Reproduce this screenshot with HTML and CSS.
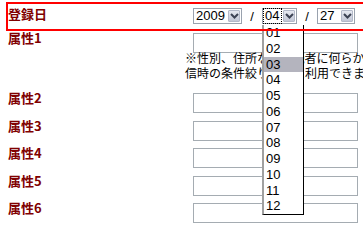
FILE: index.html
```html
<!DOCTYPE html>
<html lang="ja">
<head>
    <meta charset="UTF-8">
    <title>属性設定</title>
    <link rel="stylesheet" href="styles.css">
</head>
<body>
    <div class="form">
        <div class="row date-row">
            <div class="label">登録日</div>
            <div class="date-field">
                <div class="select select-year">
                    <span class="select-value">2009</span>
                    <span class="select-btn"><svg width="9" height="6" viewBox="0 0 9 6"><path d="M1 1 L4.5 4.5 L8 1" fill="none" stroke="#3c4354" stroke-width="2"/></svg></span>
                </div>
                <span class="sep">/</span>
                <div class="select select-month">
                    <span class="select-value focused">04</span>
                    <span class="select-btn"><svg width="9" height="6" viewBox="0 0 9 6"><path d="M1 1 L4.5 4.5 L8 1" fill="none" stroke="#3c4354" stroke-width="2"/></svg></span>
                    <ul class="dropdown">
                        <li>01</li>
                        <li>02</li>
                        <li class="active">03</li>
                        <li>04</li>
                        <li>05</li>
                        <li>06</li>
                        <li>07</li>
                        <li>08</li>
                        <li>09</li>
                        <li>10</li>
                        <li>11</li>
                        <li>12</li>
                    </ul>
                </div>
                <span class="sep">/</span>
                <div class="select select-day">
                    <span class="select-value">27</span>
                    <span class="select-btn"><svg width="9" height="6" viewBox="0 0 9 6"><path d="M1 1 L4.5 4.5 L8 1" fill="none" stroke="#3c4354" stroke-width="2"/></svg></span>
                </div>
            </div>
        </div>

        <div class="row attr-row first">
            <div class="label">属性1</div>
            <div class="field">
                <input type="text" class="text-input">
                <p class="note">※性別、住所など、読者に何らかの属性を設定して、配<br>信時の条件絞り込みに利用できます。</p>
            </div>
        </div>
        <div class="row attr-row">
            <div class="label">属性2</div>
            <div class="field"><input type="text" class="text-input"></div>
        </div>
        <div class="row attr-row">
            <div class="label">属性3</div>
            <div class="field"><input type="text" class="text-input"></div>
        </div>
        <div class="row attr-row">
            <div class="label">属性4</div>
            <div class="field"><input type="text" class="text-input"></div>
        </div>
        <div class="row attr-row">
            <div class="label">属性5</div>
            <div class="field"><input type="text" class="text-input"></div>
        </div>
        <div class="row attr-row">
            <div class="label">属性6</div>
            <div class="field"><input type="text" class="text-input"></div>
        </div>
    </div>
</body>
</html>
```

FILE: styles.css
```css
html, body {
    margin: 0;
    padding: 0;
}
body {
    font-family: "Noto Sans CJK JP", sans-serif;
    background: #fff;
    color: #000;
    width: 363px;
    height: 225px;
    overflow: hidden;
}
.form {
    padding: 2px 0 0 6px;
    width: 400px;
}
.row {
    display: flex;
    align-items: flex-start;
    padding-left: 2px;
}
.label {
    width: 177px;
    flex: none;
    margin-top: -2px;
    font-size: 13px;
    font-weight: bold;
    line-height: 13px;
    color: #800000;
}
.field {
    flex: none;
}

/* date row */
.date-row {
    position: relative;
    height: 29px;
    box-sizing: border-box;
    padding-top: 6px;
}
.date-row::after {
    content: "";
    position: absolute;
    left: 0;
    top: 0;
    right: 0;
    bottom: 0;
    border: 2px solid #f00;
    z-index: 2;
}
.date-row .label {
    margin-top: -1px;
}
.date-field {
    display: flex;
    align-items: center;
    margin-left: 8px;
}
.select {
    position: relative;
    display: flex;
    height: 16px;
    box-sizing: border-box;
    border: 1px solid #9aa2ae;
    background: #fff;
}
.select-year { width: 49px; }
.select-month { width: 35px; }
.select-day { width: 38px; }
.select-value {
    flex: 1;
    font-family: "Liberation Sans", sans-serif;
    font-size: 13px;
    line-height: 14px;
    padding-left: 2px;
}
.select-value.focused {
    margin: 0 1px 0 1px;
    padding-left: 1px;
    outline: 1px dotted #000;
}
.select-btn {
    width: 12px;
    margin: 1px;
    box-sizing: border-box;
    border: 1px solid #b3b9c9;
    border-radius: 1px;
    background: linear-gradient(#e6e9f1, #c2c7d6);
    display: flex;
    align-items: center;
    justify-content: center;
}
.sep {
    width: 20px;
    text-align: center;
    font-family: "Liberation Sans", sans-serif;
    font-size: 13px;
}
.dropdown {
    position: absolute;
    left: -1px;
    top: 16px;
    z-index: 1;
    width: 42px;
    box-sizing: border-box;
    margin: 0;
    padding: 0;
    list-style: none;
    background: #fff;
    border-left: 2px solid #a0a0a0;
    border-right: 1px solid #000;
    border-bottom: 1px solid #000;
}
.dropdown li {
    height: 15.75px;
    line-height: 15.75px;
    padding-left: 2px;
    font-family: "Liberation Sans", sans-serif;
    font-size: 13px;
}
.dropdown li.active {
    background: #b4b4be;
}

/* attribute rows */
.attr-row {
    margin-top: 7.5px;
}
.attr-row.first {
    margin-top: 2px;
}
.text-input {
    display: block;
    width: 165px;
    height: 20px;
    box-sizing: border-box;
    margin: 0 0 0 8px;
    padding: 0;
    border: 1px solid #a5acb2;
    background: #fff;
}
.note {
    margin: -3px 0 5.5px 0;
    font-size: 12px;
    line-height: 15px;
    white-space: nowrap;
}
```
